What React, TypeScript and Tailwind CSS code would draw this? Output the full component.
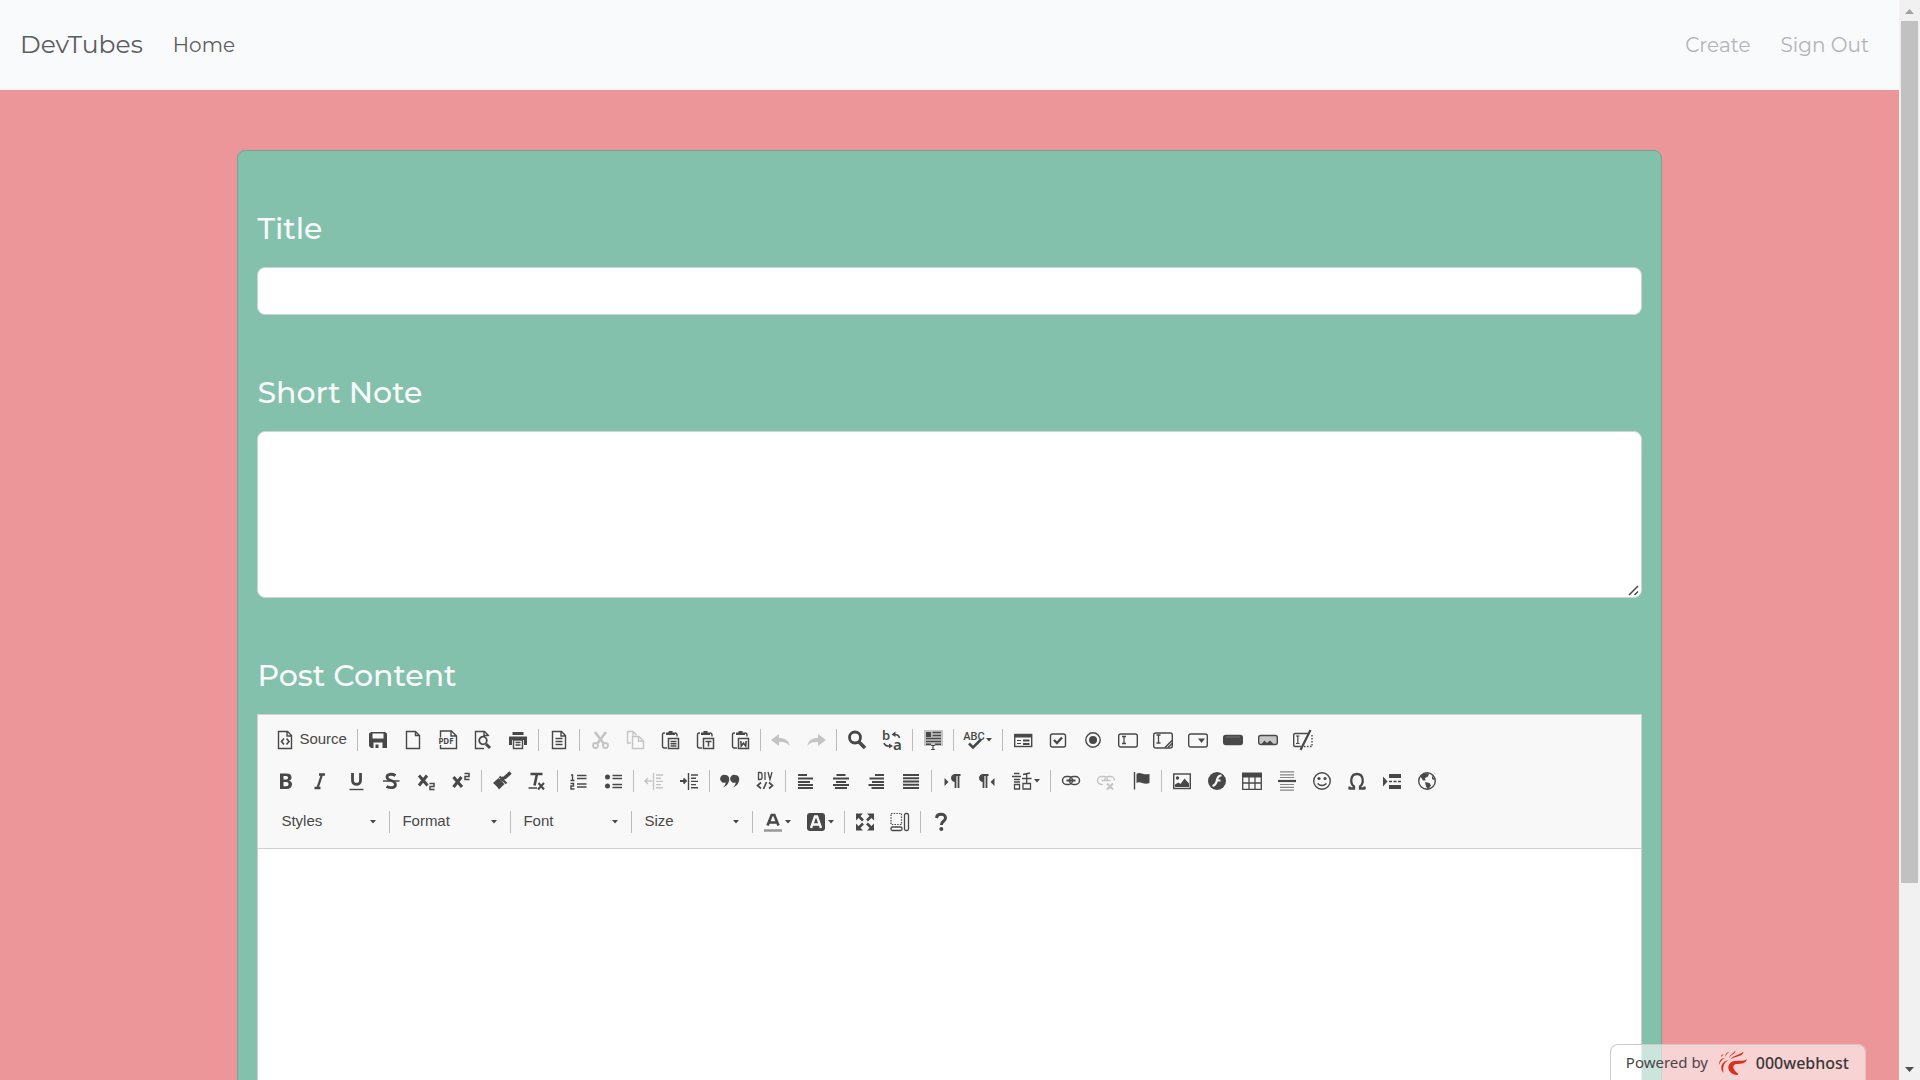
import type { ReactNode } from "react";

const INK = "#484848";

/* ---------- icon helpers: every toolbar icon lives on a 20 by 20 grid ---------- */

function Glyph({ x, y, size, children, font = "Noto Sans", weight = 700, anchor = "middle" }: {
  x: number; y: number; size: number; children: string; font?: string; weight?: number; anchor?: "middle" | "start";
}) {
  return (
    <text x={x} y={y} fontSize={size} fontFamily={`"${font}", sans-serif`} fontWeight={weight} textAnchor={anchor} fill="currentColor" stroke="none">
      {children}
    </text>
  );
}

const doc = <path d="M3.500 1.500h9l4 4v13h-13zM12 1.500v4.500h4.500" />;
const clipboard = (
  <>
    <path d="M5 3H4Q2.500 3 2.500 5v11q0 2 2 2h2.500M15 3q2 0 2 2v1.500" />
    <path d="M6 5V2.500h2.500V1h4v1.500H15V5z" fill="currentColor" stroke="none" />
    <path d="M8.500 8.500h10v10h-10z" strokeWidth="1.500" />
  </>
);
const ibeam = <path d="M4 6.500h4M6 6.500v7M4 13.500h4" strokeWidth="1.300" />;

const icons: Record<string, ReactNode> = {
  source: <>{doc}<path d="M9 8.500 6.500 11.500 9 14.500M11.500 8.500 14 11.500 11.500 14.500" strokeWidth="1.600" /></>,
  save: <path fillRule="evenodd" fill="currentColor" stroke="none" d="M3 2h14l2 1.500V18H3l-2-2V3.500zM4.500 3.500v5h11v-5zM5.500 12.500V18h2v-3.500h3V18h4v-5.500z" />,
  newPage: <path d="M3.500 1.500h9l4 4v13h-13zM12.500 1.500v4h4" />,
  pdf: <>
    <path d="M2.500 7.500V1h11L18.500 6v12.500h-16V15M13 1v5h5" />
    <path d="M0 8h16v6H0z" fill="#f8f8f8" stroke="none" />
    <Glyph x={8} y={13.500} size={8}>PDF</Glyph>
  </>,
  preview: <><path d="M15.500 6V5.500l-4-4h-9v17H11M11 1.500v4h4.500" /><circle cx="10" cy="10.500" r="3.800" strokeWidth="1.800" /><path d="m13 14 4 4" strokeWidth="3" /></>,
  print: <>
    <path d="M4.500 2h11v3h-11zM1 6.500h18V15h-3v-5H4v5H1z" fill="currentColor" stroke="none" />
    <path d="M5.500 10h9v8.500h-9zM7.500 12.500h5M7.500 15h5" />
  </>,
  templates: <><path d="M3.500 1.500h9l4 4v13h-13zM12 1.500v4.500h4.500M6.500 8.500h7M6.500 11.500h7M6.500 14.500h7" /></>,
  cut: <><path d="M5 2l9 12M16 2 7 14" strokeWidth="2.600" /><circle cx="5.500" cy="15.500" r="2.500" strokeWidth="1.800" /><circle cx="15.500" cy="15.500" r="2.500" strokeWidth="1.800" /></>,
  copy: <><path d="M6 13H2.500V1.500H8l3.500 3.500M8 1.500v4" /><path d="M7.500 6.500h6.500l4.500 4.500v7.500h-11zM13.500 6.500v4.500h5" /></>,
  paste: <>{clipboard}<path d="M10.500 11.500h6M10.500 13.700h6M10.500 16h6" /></>,
  pasteText: <>{clipboard}<path d="M10.500 11.500h6M13.500 11.500v5" strokeWidth="1.500" /></>,
  pasteWord: <>{clipboard}<path d="m10.800 11 .5 5 2.200-3 2.200 3 .5-5" strokeWidth="1.600" /></>,
  undo: <path d="M0 10 8 4v4c6 0 10 2.500 10.500 8C16 12.500 13 12 8 12v4z" fill="currentColor" stroke="none" />,
  redo: <path d="m20 10-8-6v4C6 8 2 10.500 1.500 16 4 12.500 7 12 12 12v4z" fill="currentColor" stroke="none" />,
  find: <><circle cx="8" cy="7.500" r="5.500" strokeWidth="2.800" /><path d="m12 12 6 6" strokeWidth="3.600" /></>,
  replace: <>
    <Glyph x={0} y={10} size={13} anchor="start" weight={600}>b</Glyph>
    <Glyph x={11} y={19.500} size={15} anchor="start" weight={600}>a</Glyph>
    <path d="M12 4.500q4.500-.5 5.500 3.500M2 13q1 3.500 6 3" strokeWidth="1.600" /><path d="m9.500 4.500 4-3v5.500zM11 16l-4-2.500v5z" fill="currentColor" stroke="none" />
  </>,
  selectAll: <>
    <path d="M1 0h19v16H1z" fill="#c4c4c4" stroke="none" />
    <path d="M3 2h5v5H3z" fill="currentColor" stroke="none" />
    <path d="M9.500 2.500H18M9.500 5.500H18M3 8.500h15M3 11.500h15M3 14.200h5M12 14.200h6" strokeWidth="1.600" /><path d="M8 15.500h4M10 15.500v4M8 19.500h4" strokeWidth="1.200" />
  </>,
  spell: <><Glyph x={10} y={10} size={11} font="Roboto" weight={500}>ABC</Glyph><path d="m5 13.500 4 4 8-8" strokeWidth="2.600" /></>,
  form: <>
    <rect x="1.700" y="4.500" width="17" height="12" strokeWidth="1.400" /><path d="M1 4h18v3.500H1z" fill="currentColor" stroke="none" />
    <path d="M4 10.500h4M4 13.500h4" strokeWidth="1.200" /><path d="M10 10.500h6.500M10 14h6.500" strokeWidth="2" />
  </>,
  checkbox: <><rect x="2.500" y="4" width="15" height="13" rx="2" /><path d="m6 10 3 3 5-5.500" strokeWidth="2.400" /></>,
  radio: <><circle cx="10" cy="10" r="7.200" /><circle cx="10" cy="10" r="4" fill="currentColor" stroke="none" /></>,
  textField: <><rect x=".7" y="4" width="18.600" height="13" rx="2" />{ibeam}</>,
  textArea: <><rect x=".7" y="3" width="18.600" height="15" rx="2" /><path d="M3.500 5h4M5.500 5v8M3.500 13h4" strokeWidth="1.300" /><path d="m12 17.500 7-7M15 17.500l4-4" strokeWidth="1.500" /></>,
  selectField: <><rect x=".7" y="4" width="18.600" height="13" rx="2" /><path d="M10 8.500h7L13.500 13z" fill="currentColor" stroke="none" /></>,
  buttonField: <><rect x=".7" y="5.500" width="18.600" height="9" rx="2" fill="currentColor" /><path d="M3 7h14" stroke="#777" strokeWidth="1" /></>,
  imageButton: <><rect x=".7" y="5.500" width="18.600" height="9" rx="2" fill="#c8c8c8" /><path d="m3.500 14 3-3.500 2.500 2.500 3-2.500 3.500 3.500z" fill="currentColor" stroke="none" /></>,
  hidden: <><path d="M15 3.500H2q-1.300 0-1.300 1.500v10q0 1.500 1.300 1.500h6" /><path d="M3 6h3.500M4.800 6v7.500M3 13.500h3.500" strokeWidth="1.200" /><path d="M17.500 0 7.500 20" strokeWidth="2.200" /><path d="M19 5v11.500h-8" strokeDasharray="1.500 1.500" /></>,

  bold: <path fill="currentColor" stroke="none" fillRule="evenodd" d="M4 2.500h6.500c3.500 0 5 1.500 5 4 0 1.700-1 2.900-2.500 3.200 2 .3 3 1.700 3 3.600 0 3-2 4.700-5.500 4.700H4zM7.500 5v3.500h2.700c1.200 0 1.800-.6 1.800-1.700S11.400 5 10.200 5zM7.500 11v4.300h3c1.300 0 2-.8 2-2.200 0-1.300-.7-2.100-2-2.100z" />,
  italic: <path d="M8 3.500H14M3.500 17h6M11 3.500 6.500 17" strokeWidth="2.300" />,
  underline: <><path d="M6.500 2v7.500c0 5 8 5 8 0V2" strokeWidth="2.800" /><path d="M3.500 18.500h14" /></>,
  strike: <><path d="M14.500 4.500C11 2.500 6 2.800 6 6c0 4.500 8.500 2.500 8.500 7.500 0 3.500-5 4-9 2" strokeWidth="2.800" /><path d="M2 10h16.500" strokeWidth="1.500" /></>,
  sub: <><path d="m3 4.500 8.500 10M11 4.500 3 14.500" strokeWidth="3" /><path d="M13.500 12.500H18v3h-4v3h4.500" strokeWidth="1.500" /></>,
  sup: <><path d="m2.500 6 8.500 10M10.500 6l-8 10" strokeWidth="3" /><path d="M13.500 2.500H18v3h-4v3h4.500" strokeWidth="1.500" /></>,
  brush: <><path d="m1 12 5.500-5 6 6L7 18.500c-1-2-3-4-6-6.500z" fill="currentColor" stroke="none" /><path d="m9 9.500 3-3M12.500 7 18.500 1.500" strokeWidth="3.500" /><path d="m7.500 5.500 7 7" strokeWidth="2.200" /></>,
  removeFormat: <><path d="M3.500 3h12M10 3 7.500 14.500" strokeWidth="2.600" /><path d="M1.500 17h8.500" strokeWidth="1.500" /><path d="m11.500 12 5.500 6.500M17 12l-6 6.500" strokeWidth="2" /></>,
  numbered: <><path d="M3 4h1.500v5M2.500 9.500h4M2.500 12.500h3v2.500h-2.500v3h3.500" /><path d="M9 4.500h9.500M9 7.500h9.500M9 13h9.500M9 16h9.500" /></>,
  bullets: <><circle cx="4.500" cy="6" r="2.500" fill="currentColor" stroke="none" /><circle cx="4.500" cy="15" r="2.500" fill="currentColor" stroke="none" /><path d="M9.500 4.500H19M9.500 7.500H19M9.500 13.500H19M9.500 16.500H19" /></>,
  outdent: <><path d="M1 10h7M4 7l-3 3 3 3" /><path d="M9.500 2v17" /><path d="M12 4h7M12 7.200h5M12 10.400h7M12 13.600h5M12 16.800h7" /></>,
  indent: <><path d="M1 10h6M4.500 7.500 7 10l-2.500 2.500" strokeWidth="1.800" /><path d="M9.500 2v17" /><path d="M12 4h7M12 7.200h5M12 10.400h7M12 13.600h5M12 16.800h7" /></>,
  quote: <path d="M5.200 4a4 4 0 1 0 .5 7.500C5.500 13.500 4.500 15 3 16.500c4-1.500 6.200-4.500 6.200-8.500 0-2.500-1.700-4-4-4zM15.200 4a4 4 0 1 0 .5 7.500c-.2 2-1.200 3.500-2.700 5 4-1.500 6.200-4.500 6.200-8.500 0-2.500-1.700-4-4-4z" fill="currentColor" stroke="none" />,
  div: <><path d="M3.500 1.500v7H5q2 0 2-2v-3q0-2-2-2zM10 1v8M13 1l2 7.500L17 1" strokeWidth="1.300" /><path d="m6 11.500-3.500 3 3.500 3M14 11.500l3.500 3-3.500 3M11.500 11 8.500 18" strokeWidth="1.700" /></>,
  left: <path d="M2 4h9M2 7.500h15M2 11h12M2 14h15M2 17h15" strokeWidth="2" />,
  center: <path d="M5.500 4h9M2 7.500h16M5 11h10M2 14h16M4 17h12" strokeWidth="2" />,
  right: <path d="M9 4h9M3.500 7.500H18M6 11h12M2.500 14H18M5.500 17H18" strokeWidth="2" />,
  justify: <path d="M2 4h16M2 7.200h16M2 10.500h16M2 13.800h16M2 17h16" strokeWidth="2" />,
  ltr: <><path d="m2.500 7 4 4-4 4z" fill="currentColor" stroke="none" /><path d="M12 4h6.500M13.500 3.500V17M16.500 3.500V17" strokeWidth="1.800" /><path d="M13.500 3c-6 0-6 8 0 8z" fill="currentColor" stroke="none" /></>,
  rtl: <><path d="m17.500 7-4 4 4 4z" fill="currentColor" stroke="none" /><path d="M5 4h6.500M6.500 3.500V17M9.500 3.500V17" strokeWidth="1.800" /><path d="M6.500 3c-6 0-6 8 0 8z" fill="currentColor" stroke="none" /></>,
  language: <path d="M2 2.500h5.500M0 5.500h9M2 8.500h6M2 11h6M2.500 13.500h5v4.500h-5zM18 2l-7 1.500M10 7.500h9.500M14.700 3v9M11 12.500h7.500V18H11z" strokeWidth="1.300" />,
  link: <><rect x="1.500" y="5.500" width="10" height="8" rx="4" strokeWidth="1.500" /><rect x="8.500" y="5.500" width="10" height="8" rx="4" strokeWidth="1.500" /><path d="M5.500 9.500h9" strokeWidth="2" /></>,
  unlink: <><path d="M7 13.500H5.500a4 4 0 0 1 0-8h2a4 4 0 0 1 4 4M8.500 9.500a4 4 0 0 1 4-4h2a4 4 0 0 1 4 4M5.500 9.500h9" /><path d="m11 12.500 6 6M17 12.500l-6 6" strokeWidth="2" /></>,
  anchor: <><path d="M3.500 1v17.500" /><path d="M5.500 3c4-3 6 1.500 13 0v9c-6 2.500-9-2.500-13 0z" fill="currentColor" stroke="none" /></>,
  image: <><rect x="1.700" y="3" width="16.600" height="14.500" /><circle cx="5.500" cy="7" r="1.700" fill="currentColor" stroke="none" /><path d="M3 16v-2.500l3.500-2 2 1.500 4-5.500 4.500 5V16z" fill="currentColor" stroke="none" /></>,
  flash: <><circle cx="10" cy="10" r="9" fill="currentColor" stroke="none" /><path d="M14.500 4.500c-3 0-4 2-4.500 4.500S8 14.500 5.500 15M9.500 9.500h4" stroke="#f8f8f8" strokeWidth="2.200" /></>,
  table: <><path d="M0 1.500h20v5H0z" fill="currentColor" stroke="none" /><path d="M.7 5v13.300h18.600V5M.7 12h18.600M7 6v12M13 6v12" strokeWidth="1.300" /></>,
  rule: <><path d="M3 .8h14M3 3.800h14M3 6.500h14M3 13.500h14M3 16.300h14M3 19.200h14" strokeWidth="1.200" opacity=".65" /><path d="M1 10h18" strokeWidth="2.200" /></>,
  smiley: <><circle cx="10" cy="10" r="8.300" /><circle cx="7" cy="7.500" r="1.600" fill="currentColor" stroke="none" /><circle cx="13" cy="7.500" r="1.600" fill="currentColor" stroke="none" /><path d="M5.500 12.500q4.500 4 9 0" /></>,
  omega: <path d="M2.500 17.500H7v-2C3 12.500 3 3 10 3s7 9.500 3 12.500v2h4.500M2.500 18.500v-3M17.500 18.500v-3" strokeWidth="2.300" />,
  pageBreak: <><path d="m1 5.500 4.500 5L1 15.500z" fill="currentColor" stroke="none" /><path d="M7 3h12v4H7zM7 14h12v4H7z" fill="currentColor" stroke="none" /><path d="M7 10.500h12" strokeDasharray="3 1.500" /></>,
  globe: <><circle cx="10" cy="10" r="8.300" /><path d="M3.500 5.500C6 2 9 1.500 12 3l-1 2.500-3 1.500.5 2.500L6 9.500zM8 11l4.500 1 1.500 2.500-3 4-2-3zM15 4.500l3 5-3-1.500z" fill="currentColor" stroke="none" /></>,
  textColor: <><path d="M4.500 13.500 8.700 3h2.600l4.200 10.500M6.500 10.500h7" strokeWidth="2.600" /><path d="M1 18.500h18" stroke="#999" strokeWidth="2.500" /></>,
  bgColor: <><rect x="1" y="1" width="18" height="18" rx="3" fill="currentColor" stroke="none" /><path d="M5 16 9 4.500h2L15 16M7 12.500h6.500" stroke="#f8f8f8" strokeWidth="2.400" /></>,
  maximize: <><path d="M1 1.500h7L1 8.500zM19 1.500h-7l7 7zM1 18.500h7l-7-7zM19 18.500h-7l7-7z" fill="currentColor" stroke="none" /><path d="m3 3.500 5 5M17 3.500l-5 5M3 16.500l5-5M17 16.500l-5-5" strokeWidth="2.600" /></>,
  blocks: <><rect x="1" y="1.500" width="10.500" height="11" strokeWidth="1.200" strokeDasharray="1.500 1.200" /><rect x="1" y="15" width="11" height="3.500" rx="1.500" strokeWidth="1.300" /><rect x="14.500" y="1.500" width="4" height="17" rx="1.500" strokeWidth="1.300" /></>,
  help: <><path d="M5.500 6C6 .8 14.500 1.300 14.500 6c0 3.500-4.200 3-4.200 7" strokeWidth="3" /><circle cx="10.300" cy="17" r="2" fill="currentColor" stroke="none" /></>,
};

function Icon({ name }: { name: string }) {
  return (
    <svg viewBox="0 0 20 20" className="size-5 shrink-0 overflow-visible" fill="none" stroke="currentColor" strokeWidth="1.400" aria-hidden="true">
      {icons[name]}
    </svg>
  );
}

function Caret() {
  return (
    <svg viewBox="0 0 6 4" className="h-1 w-1.5 shrink-0" aria-hidden="true">
      <path d="M0 0h6L3 3.500z" fill={INK} />
    </svg>
  );
}

const disabled = ["cut", "copy", "undo", "redo", "outdent", "unlink"];
const withMenu = ["spell", "language", "textColor", "bgColor"];

const rowOne = [
  ["save", "newPage", "pdf", "preview", "print"],
  ["templates"],
  ["cut", "copy", "paste", "pasteText", "pasteWord"],
  ["undo", "redo"],
  ["find", "replace"],
  ["selectAll"],
  ["spell"],
  ["form", "checkbox", "radio", "textField", "textArea", "selectField", "buttonField", "imageButton", "hidden"],
];
const rowTwo = [
  ["bold", "italic", "underline", "strike", "sub", "sup"],
  ["brush", "removeFormat"],
  ["numbered", "bullets"],
  ["outdent", "indent"],
  ["quote", "div"],
  ["left", "center", "right", "justify"],
  ["ltr", "rtl", "language"],
  ["link", "unlink", "anchor"],
  ["image", "flash", "table", "rule", "smiley", "omega", "pageBreak", "globe"],
];
const rowThree = [["textColor", "bgColor"], ["maximize", "blocks"], ["help"]];

function Separator() {
  return <span className="mr-0.5 ml-[3px] h-[22px] w-px shrink-0 bg-[#bcbcbc]" />;
}

function Tool({ name }: { name: string }) {
  const off = disabled.includes(name);
  const menu = withMenu.includes(name);
  return (
    <button
      type="button"
      aria-label={name}
      disabled={off}
      className={`flex h-[35px] shrink-0 items-center gap-0.5 pl-2 ${menu ? "w-[43px]" : "w-[35px]"} ${off ? "text-[#c4c4c4]" : "text-[#484848]"}`}
    >
      <Icon name={name} />
      {menu && <Caret />}
    </button>
  );
}

function Groups({ groups }: { groups: string[][] }) {
  return groups.map((group, i) => (
    <div key={group[0]} className="flex items-center">
      {i > 0 && <Separator />}
      {group.map((name) => <Tool key={name} name={name} />)}
    </div>
  ));
}

function Combo({ label }: { label: string }) {
  return (
    <div className="flex items-center">
      <div className="relative flex w-[115px] items-center">
        <select aria-label={label} className="h-[35px] w-full appearance-none bg-transparent pl-2.5 text-[15px] text-[#484848]">
          <option>{label}</option>
        </select>
        <span className="pointer-events-none absolute right-2.5 flex"><Caret /></span>
      </div>
      <Separator />
    </div>
  );
}

function Editor() {
  return (
    <div className="border border-[#d1d1d1] bg-white font-['Liberation_Sans',Arial,sans-serif]">
      <div role="toolbar" aria-label="Formatting" className="flex flex-col gap-1.5 border-b border-[#d1d1d1] bg-[#f8f8f8] px-[9px] pt-[7px] pb-[9px]">
        <div className="flex flex-wrap items-center">
          <button type="button" className="flex h-[35px] w-[87px] items-center gap-1 pl-2 text-[15px] text-[#484848]">
            <Icon name="source" />
            Source
          </button>
          <Separator />
          <Groups groups={rowOne} />
        </div>
        <div className="flex flex-wrap items-center pl-px"><Groups groups={rowTwo} /></div>
        <div className="flex flex-wrap items-center pl-1">
          {["Styles", "Format", "Font", "Size"].map((label) => <Combo key={label} label={label} />)}
          <Groups groups={rowThree} />
        </div>
      </div>
      <div role="textbox" aria-label="Post Content" contentEditable suppressContentEditableWarning className="min-h-[250px] outline-none" />
    </div>
  );
}

function HostBadge() {
  return (
    <a href="#host" className="absolute right-[33px] bottom-0 flex h-9 items-center rounded-t-lg border border-b-0 border-[#d9c4c6] bg-white/58 pr-4 pl-[15px] font-['Noto_Sans',sans-serif] text-[15px] text-[#4a4446]">
      <span className="w-[92px]">Powered by</span>
      <svg viewBox="0 0 30 26" className="mr-2 h-[26px] w-[30px]" fill="#d9301f" aria-hidden="true">
        <path d="M29 9c-1 4.500-6 5-10 5-5 0-5 5.500 1 9.500 1 .8-.5 1.700-2 1.500C9 23.500 8 14 14.500 11.500 20 10 25 12 29 9z" />
        <path d="M25.500 1.500C25 7 18 5.500 12.500 9.500 15 5 22 5 25.500 1.500z" />
        <path d="M17 .5c1.500 3-3.500 3.500-6 7.500C12 4 16 3.500 17 .5z" />
        <path d="M11.500 2C9.500 3 8 4.500 7.500 7 7 4 9 2 11.500 2z" />
        <path d="M11 10C6 12.500 4.500 16 5.500 23 1 18 3.500 11 11 10z" />
        <path d="M7 8C3.500 9.500 2 12 1.500 15 .500 11 3 8 7 8zM6 4 3 7l.5-2z" />
      </svg>
      <span className="text-[16px] font-medium text-[#3c3638]">000webhost</span>
    </a>
  );
}

function Scrollbar() {
  return (
    <div aria-hidden="true" className="flex w-[21px] shrink-0 flex-col items-center bg-[#f1f1f1]">
      <svg viewBox="0 0 21 21" className="size-[21px] shrink-0"><path d="m6 14 4.500-5 4.500 5z" fill="#a3a3a3" /></svg>
      <div className="flex w-full flex-1 flex-col px-0.5">
        <div className="h-[83%] bg-[#c1c1c1]" />
      </div>
      <svg viewBox="0 0 21 21" className="size-[21px] shrink-0"><path d="m6 8 4.500 5L15 8z" fill="#505050" /></svg>
    </div>
  );
}

const labelClass = "block text-[30px] leading-9 font-medium text-[#f8f9fa]";

export default function App() {
  return (
    <div className="flex h-screen overflow-hidden font-[Montserrat,Inter,sans-serif]">
      <div className="relative min-w-0 flex-1 overflow-hidden bg-[#ed9699]">
        <nav className="flex h-[90px] items-center bg-[#f8fafc] pr-[30px] pl-5 text-[20px] font-normal">
          <a href="#top" className="mr-[30px] text-[25px] text-[#5c5d5e]">DevTubes</a>
          <a href="#home" className="text-[#5c5d5e]">Home</a>
          <div className="ml-auto flex gap-[30px] text-[#b2b4b6]">
            <a href="#create">Create</a>
            <a href="#signout">Sign Out</a>
          </div>
        </nav>
        <main className="mx-auto mt-[60px] w-3/4 rounded-lg border border-[#72a594] bg-[#83c1ac] px-[19px] pt-[60px]">
          <form>
            <label htmlFor="title" className={labelClass}>Title</label>
            <input id="title" type="text" className="mt-5 block h-12 w-full rounded-lg border border-[#ced4da] bg-white px-4 outline-none" />
            <label htmlFor="note" className={`mt-[60px] ${labelClass}`}>Short Note</label>
            <div className="relative mt-5">
              <textarea id="note" className="block h-[167px] w-full resize-none rounded-lg border border-[#ced4da] bg-white p-4 outline-none" />
              <svg viewBox="0 0 12 12" className="pointer-events-none absolute right-0.5 bottom-0.5 size-3" fill="none" stroke="#484848" strokeWidth="1.500" aria-hidden="true">
                <path d="m1 11 9-9M6.500 11 10 7.500" />
              </svg>
            </div>
            <h2 className={`mt-[60px] mb-5 ${labelClass}`}>Post Content</h2>
            <Editor />
          </form>
        </main>
        <HostBadge />
      </div>
      <Scrollbar />
    </div>
  );
}
